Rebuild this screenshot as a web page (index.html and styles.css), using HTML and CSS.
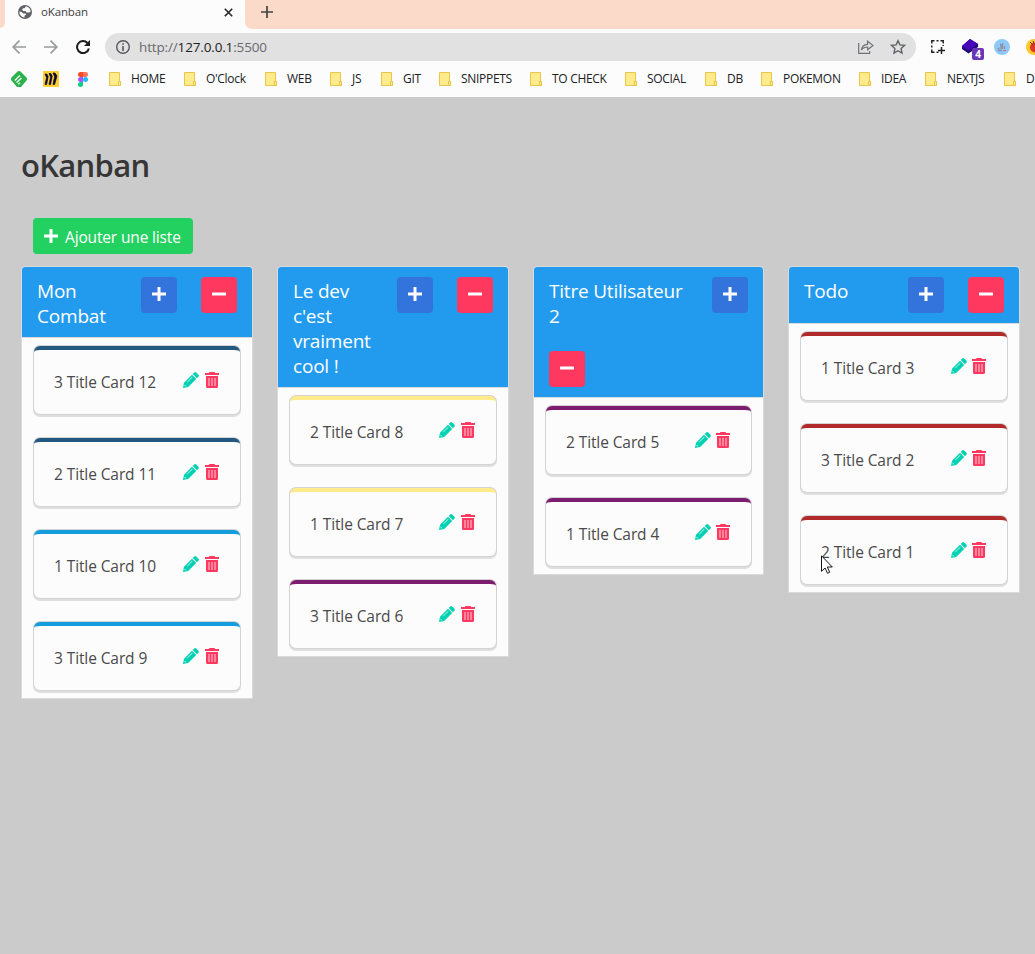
FILE: index.html
```
<!DOCTYPE html>
<html lang="fr">
<head>
<meta charset="utf-8">
<title>oKanban</title>
<link rel="stylesheet" href="styles.css">
</head>
<body>
<svg class="defs" width="0" height="0">
  <symbol id="plus" viewBox="0 0 14 14"><path d="M5.5 0h3v5.5H14v3H8.500V14h-3V8.500H0v-3h5.500z"/></symbol>
  <symbol id="minus" viewBox="0 0 14 14"><path d="M.5 5.500h13q.5 0 .5.500v2q0 .5-.5.500H.5Q0 8.500 0 8V6q0-.5.500-.500z"/></symbol>
  <symbol id="pencil" viewBox="0 0 16 16"><path d="M11.200.6q1-1 2 0l2.200 2.200q1 1 0 2l-1.500 1.500-4.200-4.200zM9 2.800 13.200 7l-8 8L0 16l1-5.200z"/><path class="hole" d="M3.800 10 9 4.800l.6.6L4.400 10.600zM1.700 12.500l1.800 1.800-1.300.3-.8-.8z"/></symbol>
  <symbol id="trash" viewBox="0 0 14 16"><path d="M4.500 0h5l.7 1H14v2H0V1h3.800zM1 4h12v10.500q0 1.500-1.500 1.500h-9Q1 16 1 14.500z"/><path class="slot" d="M3.300 6h1.400v8H3.300zm3 0h1.400v8H6.300zm3 0h1.400v8H9.300z"/></symbol>
  <symbol id="folder" viewBox="0 0 12 14"><path d="M.5.5h10v9h1v4H.5z" fill="#ffeb8c" stroke="#e9c54b"/><path d="M9.500 13.500v-4h2v4z" fill="#ffeb8c" stroke="#e9c54b"/></symbol>
</svg>

<header class="browser">
  <div class="tabstrip">
    <div class="tab-prev"></div>
    <div class="tab">
      <svg class="globe" viewBox="0 0 14 14"><circle cx="7" cy="7" r="7" fill="#5f6368"/><path d="M8 1.300 6.500 3.200H5L4.200 4.500 5 6h2.500l1 1.500h2L12.500 7A5.600 5.600 0 0 0 8 1.300zM1.400 6.500 3.500 7l1.700 1.500h2.300l.5 1.200-1.500 1V12.600A5.600 5.600 0 0 1 1.400 6.500z" fill="#fcfcfc"/></svg>
      <span class="tab-title">oKanban</span>
      <svg class="tab-close" viewBox="0 0 9 9"><path d="m.8.8 7.400 7.400m0-7.400L.8 8.200" stroke="#252525" stroke-width="1.600"/></svg>
    </div>
    <div class="tab-rest"><svg width="12" height="12" viewBox="0 0 12 12"><path d="M6 0v12M0 6h12" stroke="#444" stroke-width="1.700"/></svg></div>
  </div>
  <div class="toolbar">
    <svg class="nav back" viewBox="0 0 14 14"><path d="M14 7H1.500M7.500.7 1.200 7l6.300 6.300" stroke="#999a9e" stroke-width="1.700" fill="none"/></svg>
    <svg class="nav forward" viewBox="0 0 14 14"><path d="M0 7h12.500M6.500.7 12.800 7l-6.300 6.300" stroke="#999a9e" stroke-width="1.700" fill="none"/></svg>
    <svg class="nav reload" viewBox="0 0 14 14"><path d="M12.900 8.500A6 6 0 1 1 11.500 3" stroke="#1c1c1e" stroke-width="2" fill="none"/><path d="M14 0v6H8z" fill="#1c1c1e"/></svg>
    <div class="address">
      <svg class="info" viewBox="0 0 14 14"><circle cx="7" cy="7" r="6.300" fill="none" stroke="#55565f" stroke-width="1.400"/><path d="M6.200 3.200h1.600v1.600H6.200zm0 2.800h1.600v5H6.200z" fill="#55565f"/></svg>
      <span class="url">http://<b>127.0.0.1</b>:5500</span>
      <svg class="share" viewBox="0 0 16 14"><path d="M.7 3v10.300h11V11M3.500 10c.3-4 2.500-5.500 6-5.700V1.200L15 5.500 9.700 9.800V7C7 7 5 7.700 3.500 10z" stroke="#707276" stroke-width="1.200" fill="none"/></svg>
      <svg class="star" viewBox="0 0 16 16"><path d="m8 1.700 1.900 4.200 4.600.5-3.400 3.100.9 4.500-4-2.300L4 14l.9-4.500-3.400-3.100 4.600-.5z" stroke="#5f6166" stroke-width="1.400" fill="none"/></svg>
    </div>
    <svg class="capture" viewBox="0 0 14 14"><path d="M.8 3.500V.8H3.500M5.500 .8h2M9.500 .8h2.700V3.500M12.200 5v1M.8 5.500v2M.8 9.500v2.700H3.500M5.500 12.200h2M10.500 7v7M7 10.500h7" stroke="#202124" stroke-width="1.500" fill="none"/></svg>
    <div class="ext">
      <svg width="16" height="15" viewBox="0 0 16 15"><path d="M8 0 0 7v3l6.500 4.500L16 8V5z" fill="#230b76"/><path d="M8 0 0 7l6.500 4.500L16 5z" fill="#4706ba"/></svg>
      <span class="badge">4</span>
    </div>
    <svg class="round" viewBox="0 0 16 16"><circle cx="8" cy="8" r="8" fill="#8dc9f8"/><path d="M3.500 9.500h2M6 6h1v4M8.500 4v6M10.500 7v3M4 11.500h4" stroke="#8c8fa0" stroke-width="1.300" fill="none"/><path d="M9 11.500h3M6 5h1" stroke="#cf6c86"/></svg>
    <svg class="round" viewBox="0 0 16 16"><circle cx="8" cy="8" r="8" fill="#fcc82b"/><circle cx="9" cy="8.500" r="5" fill="#da3a24"/><path d="M4 3l3 3M7 2l1 3" stroke="#7b3b20"/></svg>
  </div>
  <nav class="bookmarks">
    <svg class="site" viewBox="0 0 16 16"><path d="M8 0q1 0 1.500.5l6 6Q16.500 8 15.500 9.500L10 16H6L.5 9.500Q-.5 8 .5 6.500l6-6Q7 0 8 0z" fill="#2bb24c"/><path d="m3.800 9.500 5-5M5.500 11.500l5-4.500M7.300 13.300l1.500-1.500" stroke="#e8fbee" stroke-width="1.500"/></svg>
    <svg class="site" viewBox="0 0 16 16"><path d="M0 0h16v16H0z" fill="#ffd02f"/><path d="M2 3h1.800l1.400 2.500L3.600 13.500H2L3.600 6.500zM6 2.500h1.800l1.400 2.500L7.600 13.500H6L7.600 6zM10 2h2l2 3-2.400 8.500H10L11.600 5.500z" fill="#080635" stroke="#080635" stroke-width=".7"/></svg>
    <svg class="site figma" viewBox="0 0 10 15"><path d="M5 0H2.500a2.500 2.500 0 0 0 0 5H5z" fill="#f24e1e"/><path d="M5 0h2.500a2.500 2.500 0 0 1 0 5H5z" fill="#ff7262"/><path d="M5 5H2.500a2.500 2.500 0 0 0 0 5H5z" fill="#a259ff"/><circle cx="7.500" cy="7.500" r="2.500" fill="#1abcfe"/><path d="M5 10H2.500A2.500 2.500 0 1 0 5 12.500z" fill="#0acf83"/></svg>
    <span class="mark"><svg><use href="#folder"/></svg><span>HOME</span></span>
    <span class="mark"><svg><use href="#folder"/></svg><span>O'Clock</span></span>
    <span class="mark"><svg><use href="#folder"/></svg><span>WEB</span></span>
    <span class="mark"><svg><use href="#folder"/></svg><span>JS</span></span>
    <span class="mark"><svg><use href="#folder"/></svg><span>GIT</span></span>
    <span class="mark"><svg><use href="#folder"/></svg><span>SNIPPETS</span></span>
    <span class="mark"><svg><use href="#folder"/></svg><span>TO CHECK</span></span>
    <span class="mark"><svg><use href="#folder"/></svg><span>SOCIAL</span></span>
    <span class="mark"><svg><use href="#folder"/></svg><span>DB</span></span>
    <span class="mark"><svg><use href="#folder"/></svg><span>POKEMON</span></span>
    <span class="mark"><svg><use href="#folder"/></svg><span>IDEA</span></span>
    <span class="mark"><svg><use href="#folder"/></svg><span>NEXTJS</span></span>
    <span class="mark"><svg><use href="#folder"/></svg><span>D</span></span>
  </nav>
</header>

<main class="page">
  <h1 class="title">oKanban</h1>
  <button class="add-list"><svg><use href="#plus"/></svg><span>Ajouter une liste</span></button>
  <div class="lists">
    <section class="list">
      <header class="list-head"><h2>Mon<br>Combat</h2><button class="btn add"><svg><use href="#plus"/></svg></button><button class="btn remove"><svg><use href="#minus"/></svg></button></header>
      <div class="cards">
        <article class="card navy"><span class="name">3 Title Card 12</span><svg class="edit"><use href="#pencil"/></svg><svg class="delete"><use href="#trash"/></svg></article>
        <article class="card navy"><span class="name">2 Title Card 11</span><svg class="edit"><use href="#pencil"/></svg><svg class="delete"><use href="#trash"/></svg></article>
        <article class="card sky"><span class="name">1 Title Card 10</span><svg class="edit"><use href="#pencil"/></svg><svg class="delete"><use href="#trash"/></svg></article>
        <article class="card sky"><span class="name">3 Title Card 9</span><svg class="edit"><use href="#pencil"/></svg><svg class="delete"><use href="#trash"/></svg></article>
      </div>
    </section>
    <section class="list">
      <header class="list-head"><h2>Le dev<br>c'est<br>vraiment<br>cool !</h2><button class="btn add"><svg><use href="#plus"/></svg></button><button class="btn remove"><svg><use href="#minus"/></svg></button></header>
      <div class="cards">
        <article class="card yellow"><span class="name">2 Title Card 8</span><svg class="edit"><use href="#pencil"/></svg><svg class="delete"><use href="#trash"/></svg></article>
        <article class="card yellow"><span class="name">1 Title Card 7</span><svg class="edit"><use href="#pencil"/></svg><svg class="delete"><use href="#trash"/></svg></article>
        <article class="card purple"><span class="name">3 Title Card 6</span><svg class="edit"><use href="#pencil"/></svg><svg class="delete"><use href="#trash"/></svg></article>
      </div>
    </section>
    <section class="list near">
      <header class="list-head"><h2>Titre Utilisateur<br>2</h2><button class="btn add"><svg><use href="#plus"/></svg></button><button class="btn remove"><svg><use href="#minus"/></svg></button></header>
      <div class="cards">
        <article class="card purple"><span class="name">2 Title Card 5</span><svg class="edit"><use href="#pencil"/></svg><svg class="delete"><use href="#trash"/></svg></article>
        <article class="card purple"><span class="name">1 Title Card 4</span><svg class="edit"><use href="#pencil"/></svg><svg class="delete"><use href="#trash"/></svg></article>
      </div>
    </section>
    <section class="list near">
      <header class="list-head"><h2>Todo</h2><button class="btn add"><svg><use href="#plus"/></svg></button><button class="btn remove"><svg><use href="#minus"/></svg></button></header>
      <div class="cards">
        <article class="card red"><span class="name">1 Title Card 3</span><svg class="edit"><use href="#pencil"/></svg><svg class="delete"><use href="#trash"/></svg></article>
        <article class="card red"><span class="name">3 Title Card 2</span><svg class="edit"><use href="#pencil"/></svg><svg class="delete"><use href="#trash"/></svg></article>
        <article class="card red"><span class="name">2 Title Card 1</span><svg class="edit"><use href="#pencil"/></svg><svg class="delete"><use href="#trash"/></svg>
          <svg class="cursor" viewBox="0 0 12 19"><path d="M.5.8v15.500L4 13l2.500 5.300 2.200-1L6.300 12h5z" fill="#fff" stroke="#151515"/></svg></article>
      </div>
    </section>
  </div>
</main>
</body>
</html>
```
FILE: styles.css
```
* { box-sizing: border-box; }
body {
  margin: 0;
  height: 954px;
  overflow: hidden;
  background: #cbcbcb;
  font-family: "Open Sans", "Noto Sans", sans-serif;
}
svg { display: block; flex: none; }
.defs { position: absolute; }
button { border: 0; padding: 0; font: inherit; }

.browser { height: 97px; background: #fcfcfc; overflow: hidden; }
.tabstrip { display: flex; height: 29px; background: #fcfcfc; }
.tab-prev { width: 5px; height: 28px; background: #fbdaca; border-radius: 0 0 5px 0; }
.tab { display: flex; align-items: center; width: 240px; height: 24px; padding: 0 12px 0 13px; }
.globe { width: 14px; height: 14px; }
.tab-title { flex: 1; margin-left: 9px; padding-bottom: 1px; font-size: 11.500px; letter-spacing: -.15px; color: #3c3c42; }
.tab-close { width: 9px; height: 9px; }
.tab-rest { flex: 1; padding: 6px 0 0 16px; background: #fbdaca; border-radius: 0 0 0 7px; }

.toolbar { display: flex; align-items: center; width: 1060px; height: 36px; padding-left: 12px; }
.nav { width: 14px; height: 14px; }
.forward { margin-left: 18px; }
.reload { margin-left: 18px; }
.address { display: flex; align-items: center; width: 811px; height: 28px; margin-left: 15px; padding-left: 11px; border-radius: 14px; background: #e1e1e1; }
.info { width: 14px; height: 14px; }
.url { flex: 1; margin-left: 9px; font-size: 13.500px; letter-spacing: -.15px; color: #68696f; }
.url b { font-weight: 400; color: #222; }
.share { width: 16px; height: 14px; margin-right: 16px; }
.star { width: 16px; height: 16px; margin-right: 10px; }
.capture { width: 14px; height: 14px; margin-left: 15px; }
.ext { position: relative; width: 22px; height: 16px; margin-left: 17px; }
.badge { position: absolute; left: 10px; top: 9px; width: 12px; height: 12px; border-radius: 2px; background: #6c36b8; color: #fff; font-size: 10px; font-weight: 700; line-height: 12px; text-align: center; }
.round { width: 16px; height: 16px; margin-left: 10px; }
.round + .round { margin-left: 16px; }

.bookmarks {
  display: grid;
  grid-template-columns: 32px 34px 32px 75px 81px 65px 51px 58px 91px 95px 80px 56px 98px 66px 79px 60px;
  align-items: center;
  height: 28px;
  padding-left: 11px;
}
.site { width: 16px; height: 16px; }
.figma { width: 10px; height: 15px; margin-left: 1px; }
.mark { display: flex; align-items: center; gap: 10px; font-size: 12px; letter-spacing: -.3px; color: #202124; white-space: nowrap; }
.mark svg { width: 12px; height: 14px; }
.mark span { padding-bottom: 2px; }

.page { display: flex; flex-direction: column; align-items: flex-start; padding: 50px 16px 0 22px; }
.title { margin: 0 0 0 -1px; font-size: 31px; line-height: 36px; font-weight: 600; letter-spacing: -.7px; color: #363636; }
.add-list { display: flex; align-items: center; gap: 7px; width: 160px; height: 36px; margin: 35px 0 13px 11px; padding-left: 11px; border-radius: 4px; background: #23d160; color: #fff; font-size: 15.500px; letter-spacing: -.15px; white-space: nowrap; }
.add-list span { padding-top: 1px; }
.add-list svg { width: 14px; height: 14px; fill: #fff; }

.lists { display: grid; grid-template-columns: 230px 230px 229px 230px; column-gap: 26px; align-items: start; }
.list { border-radius: 3px 3px 0 0; background: #fcfcfc; box-shadow: 0 0 0 1px #dadada; }
.list-head { display: flex; flex-wrap: wrap; align-items: flex-start; gap: 24px; padding: 10px 15px; border-radius: 3px 3px 0 0; background: #229aee; box-shadow: 0 1px 0 #dadada; }
.list-head h2 { flex: 1; margin: 2px 0 -2px; font-size: 19px; line-height: 25px; font-weight: 400; letter-spacing: -.2px; color: #fff; white-space: nowrap; }
.btn { display: flex; justify-content: center; width: 36px; height: 36px; padding-top: 10px; border-radius: 4px; }
.btn svg { width: 14px; height: 14px; fill: #fff; }
.add { background: #3273dc; }
.remove { background: #ff3860; }

.cards { display: flex; flex-direction: column; gap: 24px; padding: 9px 12px 8px; }
.card { position: relative; display: flex; align-items: center; height: 68px; padding: 0 21px 0 20px; border-top: 4px solid; border-radius: 6px; background: #fcfcfc; box-shadow: 0 0 0 1px #d3d3d3, 0 2px 0 1px #dfdfdf; }
.navy { border-color: #235880; }
.sky { border-color: #149ddd; }
.yellow { border-color: #ffeb8a; }
.purple { border-color: #7c1d6f; }
.red { border-color: #b22a2a; }
.name { flex: 1; font-size: 15.500px; letter-spacing: -.1px; color: #4a4a4a; white-space: nowrap; }
.edit { width: 16px; height: 16px; margin: -4px 6px 0 0; fill: #00d1b2; }
.near .edit { margin-right: 5px; }
.delete { width: 14px; height: 16px; margin-top: -4px; fill: #ff3860; }
.hole { fill: #9aeee0; }
.slot { fill: #ffa3b5; }
.cursor { position: absolute; left: 20px; top: 35px; width: 12px; height: 19px; }
```
